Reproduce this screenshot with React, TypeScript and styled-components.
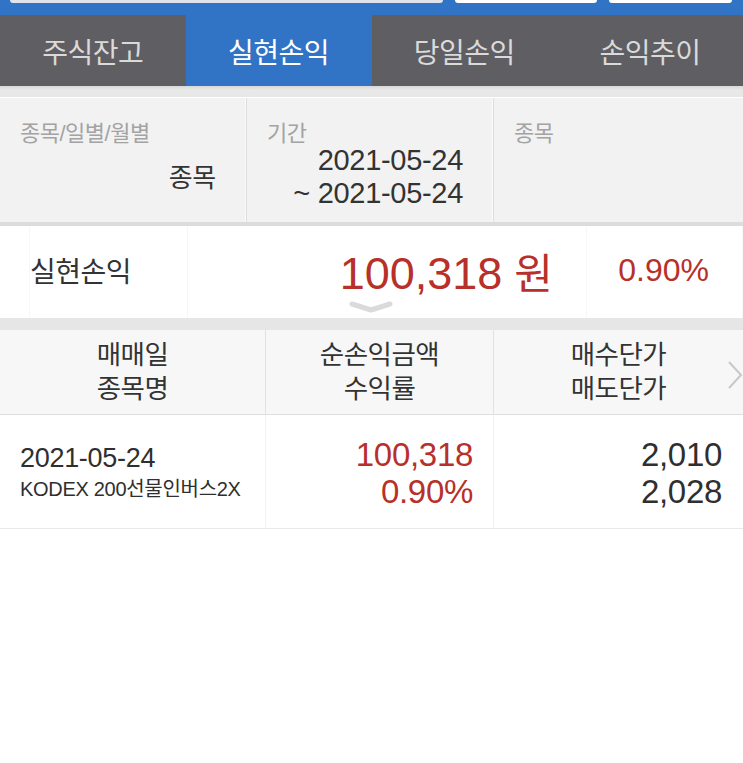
import styled, { createGlobalStyle } from 'styled-components'

const GlobalStyle = createGlobalStyle`
  body {
    margin: 0;
    background: #ffffff;
    font-family: "Liberation Sans", "Noto Sans CJK KR", sans-serif;
    color: #333333;
  }
`

const Screen = styled.div`
  width: 743px;
  min-height: 763px;
  background: #ffffff;
`

const TopBar = styled.div`
  height: 15px;
  background: #3173c5;
  display: flex;
  align-items: flex-start;
  gap: 12px;
  padding: 0 11px 0 10px;
`

const SearchField = styled.div`
  flex: 1;
  height: 3px;
  background: #dfe4ec;
  border-radius: 0 0 4px 4px;
`

const TopButton = styled.div<{ $width: number }>`
  width: ${(p) => p.$width}px;
  height: 3px;
  background: #ffffff;
  border-radius: 0 0 3px 3px;
`

const Tabs = styled.div`
  display: grid;
  grid-template-columns: repeat(4, 1fr);
  height: 71px;
  background: #5f5e63;
`

const Tab = styled.div<{ $active?: boolean }>`
  display: flex;
  align-items: center;
  justify-content: center;
  font-size: 28px;
  letter-spacing: -0.5px;
  background: ${(p) => (p.$active ? '#3173c5' : 'transparent')};
  color: ${(p) => (p.$active ? '#ffffff' : '#dadada')};
`

const ShadowBand = styled.div`
  height: 11px;
  background: linear-gradient(#d9d9d9, #e9e9e9 40%, #e6e6e6);
  border-bottom: 1px solid #ffffff;
`

const FilterRow = styled.div`
  display: grid;
  grid-template-columns: 247px 247px 1fr;
  height: 124px;
  background: #f2f2f2;
  border-bottom: 4px solid #dcdcdc;
`

const FilterCell = styled.div`
  display: flex;
  flex-direction: column;
  padding: 22px 30px 0 20px;
  border-right: 1px solid #dddddd;
  box-shadow: inset -1px 0 0 #fafafa;

  &:last-child {
    border-right: none;
    box-shadow: none;
  }
`

const FilterLabel = styled.div`
  font-size: 22px;
  line-height: 28px;
  color: #a3a3a3;
  letter-spacing: -0.5px;
`

const FilterValue = styled.div<{ $top?: number; $size: number }>`
  align-self: flex-end;
  text-align: right;
  font-size: ${(p) => p.$size}px;
  line-height: 33px;
  color: #333333;
  margin-top: ${(p) => p.$top ?? 0}px;
  letter-spacing: -0.3px;
`

const SummaryRow = styled.div`
  position: relative;
  display: grid;
  grid-template-columns: 30px 158px 399px 1fr;
  height: 92px;
  border-bottom: 12px solid #e6e6e6;
`

const SummaryCell = styled.div<{ $align?: string; $pad?: number }>`
  display: flex;
  align-items: center;
  justify-content: ${(p) => p.$align ?? 'flex-start'};
  padding-right: ${(p) => p.$pad ?? 0}px;
  border-right: 1px solid #f7f7f7;

  &:last-child {
    border-right: none;
  }
`

const SummaryLabel = styled.span`
  font-size: 28px;
  color: #333333;
  white-space: nowrap;
  letter-spacing: -0.5px;
  margin-top: -4px;
`

const Amount = styled.span<{ $size: number }>`
  font-size: ${(p) => p.$size}px;
  color: #b8302a;
  white-space: nowrap;
  margin-top: -4px;
`

const Unit = styled.span`
  margin-left: 12px;
  font-size: 42px;
`

const Chevron = styled.svg`
  position: absolute;
  left: 348px;
  bottom: 5px;
`

const Table = styled.div`
  display: grid;
  grid-template-columns: 266px 228px 1fr;
`

const HeadCell = styled.div`
  position: relative;
  height: 84px;
  background: #f7f7f7;
  border-bottom: 1px solid #dedede;
  border-right: 1px solid #e2e2e2;
  display: flex;
  flex-direction: column;
  align-items: center;
  justify-content: center;
  font-size: 26.5px;
  line-height: 34px;
  color: #333333;
  letter-spacing: -0.5px;

  &:nth-child(3) {
    border-right: none;
  }
`

const MoreArrow = styled.svg`
  position: absolute;
  right: 0;
  top: 30px;
`

const BodyCell = styled.div<{ $align?: string; $pad?: number }>`
  height: 110px;
  border-bottom: 1px solid #e8e8e8;
  border-right: 1px solid #f2f2f2;
  display: flex;
  flex-direction: column;
  justify-content: center;
  align-items: ${(p) => p.$align ?? 'flex-start'};
  padding: 3px ${(p) => p.$pad ?? 0}px 0 20px;

  &:nth-child(6) {
    border-right: none;
  }
`

const Line = styled.div<{ $size: number; $red?: boolean; $lh: number }>`
  font-size: ${(p) => p.$size}px;
  line-height: ${(p) => p.$lh}px;
  color: ${(p) => (p.$red ? '#b8302a' : '#2f2f2f')};
  white-space: nowrap;
  letter-spacing: -0.3px;
`

export default function App() {
  return (
    <Screen>
      <GlobalStyle />
      <TopBar>
        <SearchField />
        <TopButton $width={142} />
        <TopButton $width={123} />
      </TopBar>
      <Tabs>
        <Tab>주식잔고</Tab>
        <Tab $active>실현손익</Tab>
        <Tab>당일손익</Tab>
        <Tab>손익추이</Tab>
      </Tabs>
      <ShadowBand />
      <FilterRow>
        <FilterCell>
          <FilterLabel>종목/일별/월별</FilterLabel>
          <FilterValue $size={26} $top={14}>종목</FilterValue>
        </FilterCell>
        <FilterCell>
          <FilterLabel>기간</FilterLabel>
          <FilterValue $size={29} $top={-4}>
            2021-05-24
            <br />~ 2021-05-24
          </FilterValue>
        </FilterCell>
        <FilterCell>
          <FilterLabel>종목</FilterLabel>
        </FilterCell>
      </FilterRow>
      <SummaryRow>
        <SummaryCell />
        <SummaryCell>
          <SummaryLabel>실현손익</SummaryLabel>
        </SummaryCell>
        <SummaryCell $align="flex-end" $pad={33}>
          <Amount $size={45}>
            100,318<Unit>원</Unit>
          </Amount>
        </SummaryCell>
        <SummaryCell $align="flex-end" $pad={33}>
          <Amount $size={32}>0.90%</Amount>
        </SummaryCell>
        <Chevron width="46" height="12" viewBox="0 0 46 12">
          <polyline
            points="4,3 23,9 42,3"
            fill="none"
            stroke="#dadada"
            strokeWidth="5"
            strokeLinecap="round"
            strokeLinejoin="round"
          />
        </Chevron>
      </SummaryRow>
      <Table>
        <HeadCell>
          <div>매매일</div>
          <div>종목명</div>
        </HeadCell>
        <HeadCell>
          <div>순손익금액</div>
          <div>수익률</div>
        </HeadCell>
        <HeadCell>
          <div>매수단가</div>
          <div>매도단가</div>
          <MoreArrow width="16" height="30" viewBox="0 0 16 30">
            <path d="M2 2 L14 15 L2 28" fill="none" stroke="#c8c8c8" strokeWidth="2" />
          </MoreArrow>
        </HeadCell>
        <BodyCell>
          <Line $size={27} $lh={32}>2021-05-24</Line>
          <Line $size={20} $lh={30}>KODEX 200선물인버스2X</Line>
        </BodyCell>
        <BodyCell $align="flex-end" $pad={20}>
          <Line $size={33} $lh={37} $red>100,318</Line>
          <Line $size={33} $lh={37} $red>0.90%</Line>
        </BodyCell>
        <BodyCell $align="flex-end" $pad={21}>
          <Line $size={33} $lh={37}>2,010</Line>
          <Line $size={33} $lh={37}>2,028</Line>
        </BodyCell>
      </Table>
    </Screen>
  )
}
